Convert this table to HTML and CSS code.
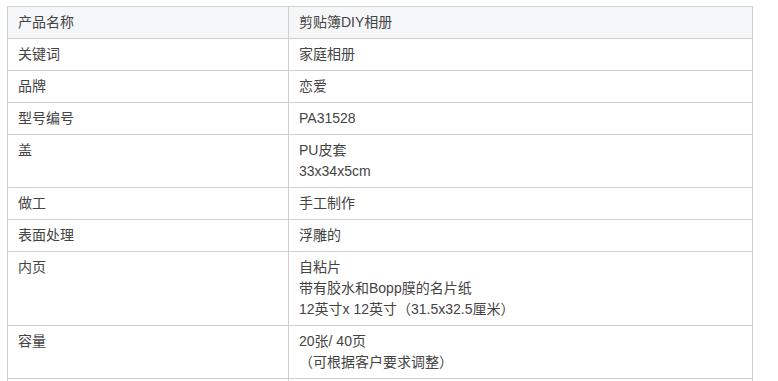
FILE: index.html
```html
<!DOCTYPE html>
<html lang="zh-CN">
<head>
<meta charset="utf-8">
<title>产品参数</title>
<link rel="stylesheet" href="styles.css">
</head>
<body>
<table class="spec">
  <colgroup><col class="col-key"><col class="col-val"></colgroup>
  <tbody>
    <tr class="head"><td>产品名称</td><td>剪贴簿DIY相册</td></tr>
    <tr><td>关键词</td><td>家庭相册</td></tr>
    <tr><td>品牌</td><td>恋爱</td></tr>
    <tr><td>型号编号</td><td>PA31528</td></tr>
    <tr><td>盖</td><td>PU皮套<br>33x34x5cm</td></tr>
    <tr><td>做工</td><td>手工制作</td></tr>
    <tr><td>表面处理</td><td>浮雕的</td></tr>
    <tr><td>内页</td><td>自粘片<br>带有胶水和Bopp膜的名片纸<br>12英寸x 12英寸（31.5x32.5厘米）</td></tr>
    <tr><td>容量</td><td>20张/ 40页<br>（可根据客户要求调整）</td></tr>
    <tr><td>包装</td><td>纸箱</td></tr>
  </tbody>
</table>
</body>
</html>
```

FILE: styles.css
```css
html, body {
  margin: 0;
  padding: 0;
  background: #ffffff;
}
body {
  padding: 6px 0 0 7px;
  font-family: "Liberation Sans", Arial, "Noto Sans CJK SC", sans-serif;
  font-size: 14px;
  color: #444444;
}
.spec {
  border-collapse: collapse;
  width: 746px;
  table-layout: fixed;
}
.col-key { width: 281px; }
.col-val { width: auto; }
.spec td {
  border: 1px solid #cfcfcf;
  padding: 5px 10px 5px 10px;
  line-height: 21px;
  vertical-align: top;
  text-align: left;
}
.spec tr.head td {
  background: #f5f6f8;
}
```
